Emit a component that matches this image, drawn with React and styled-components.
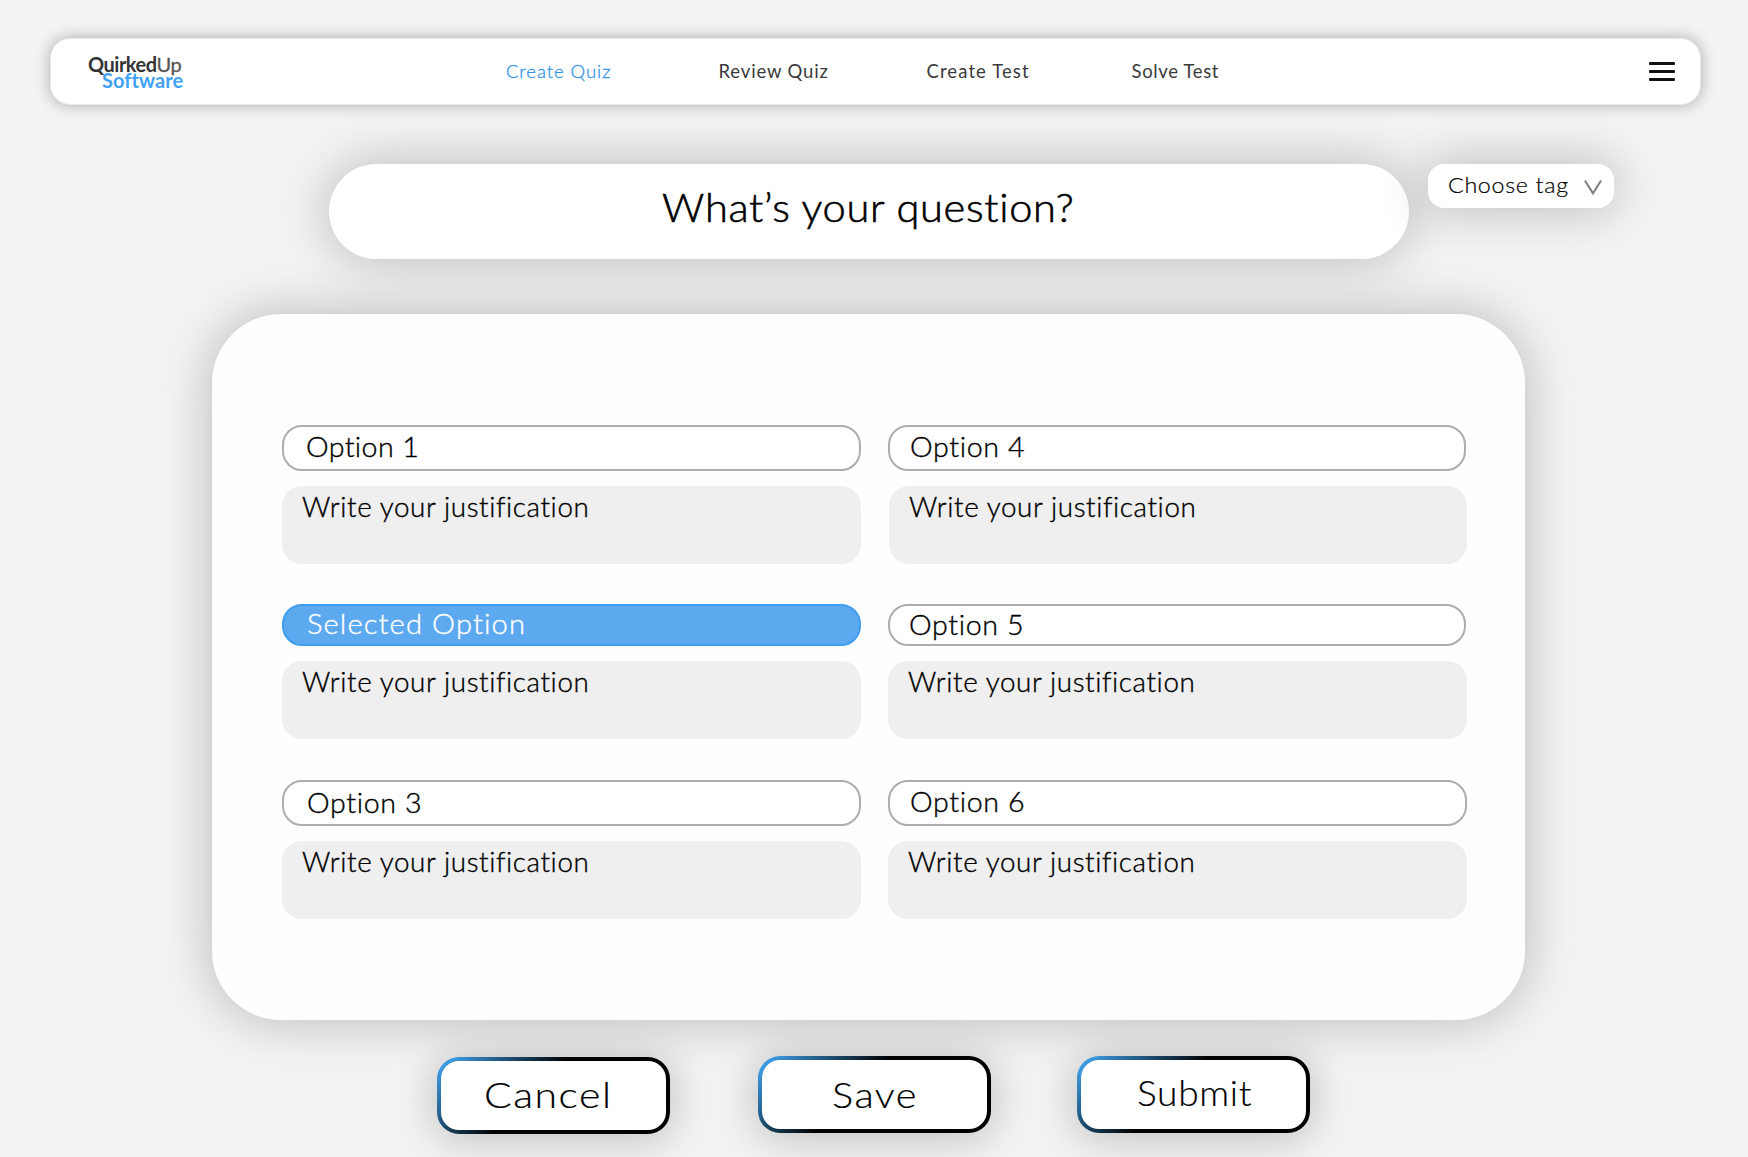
import React from "react";
import styled, { createGlobalStyle } from "styled-components";

const GlobalStyle = createGlobalStyle`
  *, *::before, *::after { box-sizing: border-box; }
  html, body { margin: 0; padding: 0; background: #f3f3f3; overflow: hidden; }
`;

const Page = styled.div`
  display: flex;
  flex-direction: column;
  width: 1748px;
  height: 1157px;
  padding-top: 38px;
  overflow: hidden;
  background: #f3f3f3;
  color: #000;
  font-family: Lato, "Open Sans", sans-serif;
  font-weight: 300;
  font-variant-ligatures: none;
`;

const NavBar = styled.header`
  display: flex;
  align-items: center;
  width: 1651px;
  height: 67px;
  margin-left: 50px;
  padding: 0 25px 0 37px;
  border: 1px solid #e9e9e9;
  border-radius: 20px;
  background: #fff;
  box-shadow: 0 0 15px 0 rgba(0, 0, 0, 0.3);
`;

const Logo = styled.div`
  width: 418px;
  margin-top: 1px;
  font-size: 20px;
  line-height: 16px;
  font-weight: 700;
  color: #333436;
`;

const LogoTop = styled.div`
  letter-spacing: -0.5px;
`;

const LogoUp = styled.span`
  font-weight: 400;
  color: #555;
  -webkit-text-stroke: 0.3px;
`;

const LogoBottom = styled.div`
  padding-left: 14px;
  letter-spacing: 0.05px;
  color: #3fa3f2;
`;

const NavLinks = styled.nav`
  display: grid;
  grid-template-columns: 212.5px 208px 205px 120px;
  padding-bottom: 1px;
`;

const NavLink = styled.a`
  font-size: 18.5px;
  line-height: 22px;
  font-weight: ${(p) => (p.$active ? 300 : 400)};
  letter-spacing: ${(p) => p.$track}px;
  color: ${(p) => (p.$active ? "#2f93ea" : "#3a3a3a")};
  -webkit-text-stroke: ${(p) => (p.$active ? "0.3px" : "0")};
  white-space: nowrap;
`;

const MenuButton = styled.button`
  display: flex;
  flex-direction: column;
  gap: 5px;
  width: 26px;
  margin: 0 0 1px auto;
  padding: 0;
  border: 0;
  background: none;
`;

const MenuBar = styled.span`
  height: 3px;
  border-radius: 1px;
  background: #111;
`;

const Label = styled.span`
  display: block;
  width: max-content;
  font-size: ${(p) => p.$size}px;
  line-height: 1;
  letter-spacing: ${(p) => p.$track}px;
  white-space: nowrap;
  -webkit-text-stroke: ${(p) => p.$stroke ?? 0.35}px;
  transform: scaleX(${(p) => p.$stretch});
  transform-origin: left center;
`;

const QuestionRow = styled.section`
  display: flex;
  align-items: flex-start;
  gap: 19px;
  margin: 59px 0 0 329px;
`;

const softShadow = "0 0 50px 2px rgba(0, 0, 0, 0.23)";

const QuestionField = styled.div`
  width: 1080px;
  height: 95px;
  padding: 23px 0 0 333px;
  border-radius: 47.5px;
  background: #fff;
  box-shadow: ${softShadow};
`;

const TagSelect = styled.div`
  display: flex;
  justify-content: space-between;
  width: 186px;
  height: 44px;
  padding: 11px 12px 0 19.5px;
  border-radius: 16px;
  background: #fff;
  box-shadow: 0 0 48px 2px rgba(0, 0, 0, 0.24);
`;

const Chevron = styled.svg`
  width: 18px;
  height: 15px;
  margin-top: 4.5px;
`;

const Card = styled.main`
  display: grid;
  grid-template-columns: 579px 579px;
  column-gap: 27px;
  align-content: start;
  width: 1313px;
  height: 706px;
  margin: 55px 0 0 212px;
  padding: 111px 0 0 70px;
  border-radius: 69px;
  background: #fefefe;
  box-shadow: ${softShadow};
`;

const Answer = styled.div`
  display: flex;
  flex-direction: column;
  gap: 15px;
  padding-bottom: ${(p) => p.$after}px;
`;

const OptionField = styled.div`
  height: ${(p) => p.$height}px;
  margin-right: ${(p) => p.$inset || 0}px;
  padding: ${(p) => p.$top}px 0 0 ${(p) => p.$left}px;
  border: 2px solid ${(p) => (p.$selected ? "#3f9eee" : "#adadad")};
  border-radius: 20px;
  background: ${(p) => (p.$selected ? "#5ca9ef" : "#fff")};
  color: ${(p) => (p.$selected ? "#fff" : "#000")};
`;

const Justification = styled.div`
  height: 78px;
  margin-left: ${(p) => p.$inset || 0}px;
  padding: 8px 0 0 ${(p) => p.$left}px;
  border-radius: 20px;
  background: #efefef;
`;

const Actions = styled.footer`
  display: flex;
  align-items: flex-start;
  margin: 36px 0 0 437px;
`;

const ActionButton = styled.button`
  width: 233px;
  height: 77px;
  margin: ${(p) => p.$drop || 0}px ${(p) => p.$after || 0}px 0 0;
  padding: ${(p) => p.$top}px 0 0 ${(p) => p.$left}px;
  display: flex;
  align-items: flex-start;
  border: 4px solid transparent;
  border-radius: 22px;
  background:
    linear-gradient(#fff, #fff) padding-box,
    linear-gradient(135deg, #3d9ae0 5%, #1d4d70 24%, #000 43%) border-box;
  box-shadow: 0 3px 42px 1px rgba(0, 0, 0, 0.23);
  color: #000;
  font: inherit;
`;

const links = [
  { text: "Create Quiz", track: 0.95, active: true },
  { text: "Review Quiz", track: 0.85 },
  { text: "Create Test", track: 1.1 },
  { text: "Solve Test", track: 0.65 },
];

const answers = [
  { text: "Option 1", height: 46, top: 7, left: 22, track: 0.35, after: 40, noteLeft: 20.3 },
  { text: "Option 4", height: 46, top: 7, left: 19.7, track: 0.6, after: 40, inset: 1, noteLeft: 20.3, noteInset: 1 },
  { text: "Selected Option", height: 42, top: 5, left: 22.5, track: 1, stretch: 1.1, after: 41, selected: true, noteLeft: 20.3 },
  { text: "Option 5", height: 42, top: 6, left: 18.7, track: 0.6, after: 41, inset: 1, noteLeft: 20.3 },
  { text: "Option 3", height: 46, top: 8, left: 22.5, track: 0.6, after: 0, noteLeft: 20.3 },
  { text: "Option 6", height: 46, top: 7, left: 19.7, track: 0.6, after: 0, noteLeft: 20.3 },
];

const actions = [
  { text: "Cancel", top: 16, left: 42.5, track: 1.3, stretch: 1.17, drop: 1, after: 88 },
  { text: "Save", top: 17, left: 70, track: 1.3, stretch: 1.135, after: 86 },
  { text: "Submit", top: 15, left: 55.5, track: 0.65, stretch: 1.06 },
];

export default function App() {
  return (
    <Page>
      <GlobalStyle />
      <NavBar>
        <Logo>
          <LogoTop>
            Quirked<LogoUp>Up</LogoUp>
          </LogoTop>
          <LogoBottom>Software</LogoBottom>
        </Logo>
        <NavLinks>
          {links.map((l) => (
            <NavLink key={l.text} $active={l.active} $track={l.track}>
              {l.text}
            </NavLink>
          ))}
        </NavLinks>
        <MenuButton aria-label="Menu">
          <MenuBar />
          <MenuBar />
          <MenuBar />
        </MenuButton>
      </NavBar>

      <QuestionRow>
        <QuestionField>
          <Label $size={40} $track={0.65} $stretch={1.04} $stroke={0.6}>
            What’s your question?
          </Label>
        </QuestionField>
        <TagSelect>
          <Label $size={21.5} $track={0.65} $stretch={1.08} $stroke={0.2}>
            Choose tag
          </Label>
          <Chevron viewBox="0 0 18 15" fill="none" stroke="#808080" strokeWidth="2">
            <path d="M0.9 0.5 L9 13.4 L17.1 0.5" />
          </Chevron>
        </TagSelect>
      </QuestionRow>

      <Card>
        {answers.map((a) => (
          <Answer key={a.text} $after={a.after}>
            <OptionField
              $height={a.height}
              $top={a.top}
              $left={a.left}
              $inset={a.inset}
              $selected={a.selected}
            >
              <Label $size={26.5} $track={a.track} $stretch={a.stretch || 1.08}>
                {a.text}
              </Label>
            </OptionField>
            <Justification $left={a.noteLeft} $inset={a.noteInset}>
              <Label $size={26.5} $track={0.57} $stretch={1.05}>
                Write your justification
              </Label>
            </Justification>
          </Answer>
        ))}
      </Card>

      <Actions>
        {actions.map((b) => (
          <ActionButton key={b.text} $top={b.top} $left={b.left} $drop={b.drop} $after={b.after}>
            <Label $size={35} $track={b.track} $stretch={b.stretch} $stroke={0.2}>
              {b.text}
            </Label>
          </ActionButton>
        ))}
      </Actions>
    </Page>
  );
}
